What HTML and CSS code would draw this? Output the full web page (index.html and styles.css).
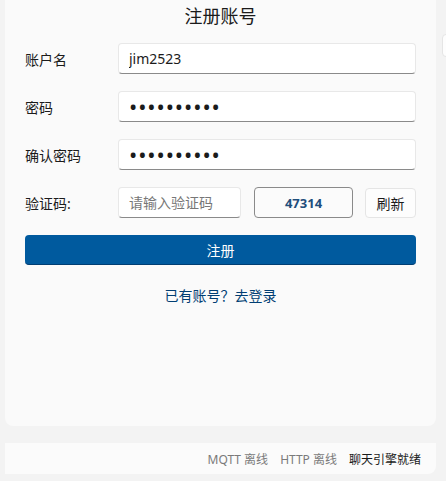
FILE: index.html
```html
<!DOCTYPE html>
<html lang="zh-CN">
<head>
    <meta charset="UTF-8">
    <meta name="viewport" content="width=device-width, initial-scale=1.0">
    <title>注册账号</title>
    <link rel="stylesheet" href="styles.css">
</head>
<body>
    <div class="page">
        <div class="card">
            <h1>注册账号</h1>
            <div class="form-row">
                <label for="username">账户名</label>
                <input type="text" id="username" class="field" value="jim2523">
            </div>
            <div class="form-row">
                <label for="password">密码</label>
                <input type="password" id="password" class="field" value="abcdefghij">
            </div>
            <div class="form-row">
                <label for="confirm">确认密码</label>
                <input type="password" id="confirm" class="field" value="abcdefghij">
            </div>
            <div class="form-row">
                <label for="captcha">验证码:</label>
                <div class="captcha-group">
                    <input type="text" id="captcha" class="field captcha-input" placeholder="请输入验证码">
                    <div class="captcha-code">47314</div>
                    <button type="button" class="refresh-btn">刷新</button>
                </div>
            </div>
            <button type="button" class="register-btn">注册</button>
            <a class="login-link" href="#">已有账号？去登录</a>
        </div>
        <div class="status-bar">
            <span class="status off">MQTT 离线</span>
            <span class="status off">HTTP 离线</span>
            <span class="status ready">聊天引擎就绪</span>
        </div>
    </div>
    <div class="side-edge"></div>
</body>
</html>
```

FILE: styles.css
```css
body {
    margin: 0;
    padding: 0;
    background: #f3f3f3;
    font-family: "Noto Sans", "Noto Sans CJK SC", sans-serif;
    color: #1b1b1b;
    overflow: hidden;
    position: relative;
}
.page {
    width: 431px;
    margin-left: 5px;
}
.card {
    background: #fafafa;
    border-radius: 0 0 8px 8px;
    height: 426px;
    box-sizing: border-box;
    padding: 0 20px;
    display: flex;
    flex-direction: column;
}
h1 {
    margin: 0;
    height: 34px;
    line-height: 32px;
    text-align: center;
    font-size: 18px;
    font-weight: 400;
    color: #1b1b1b;
}
.form-row {
    display: flex;
    align-items: center;
    height: 31px;
    margin-top: 9px;
    margin-bottom: 8px;
}
.form-row label {
    width: 93px;
    font-size: 14px;
    flex-shrink: 0;
}
.field {
    box-sizing: border-box;
    height: 31px;
    flex: 1;
    min-width: 0;
    background: #fff;
    border: 1px solid #e8e8e8;
    border-bottom-color: #8a8a8a;
    border-radius: 4px;
    padding: 0 10px;
    font-family: inherit;
    font-size: 14px;
    color: #1b1b1b;
    outline: none;
}
input[type="password"] {
    font-size: 22px;
    letter-spacing: 0.9px;
    padding-bottom: 2px;
}
.captcha-group {
    flex: 1;
    display: flex;
    align-items: center;
}
.captcha-input {
    flex: none;
    width: 123px;
}
.captcha-input::placeholder {
    color: #777;
}
.captcha-code {
    box-sizing: border-box;
    width: 99px;
    height: 31px;
    margin-left: 13px;
    border: 1px solid #8a8a8a;
    border-radius: 4px;
    background: #fbfbfb;
    display: flex;
    justify-content: center;
    align-items: center;
    font-size: 13px;
    font-weight: 700;
    color: #1f4e7c;
}
.refresh-btn {
    box-sizing: border-box;
    margin-left: auto;
    width: 51px;
    height: 30px;
    border: 1px solid #e5e5e5;
    border-radius: 4px;
    background: #fdfdfd;
    font-family: inherit;
    font-size: 14px;
    color: #1b1b1b;
    padding: 0;
}
.register-btn {
    margin-top: 9px;
    height: 30px;
    border: none;
    border-radius: 4px;
    background: #005a9e;
    border-bottom: 1px solid #003e73;
    color: #fff;
    font-family: inherit;
    font-size: 14px;
}
.login-link {
    margin-top: 20px;
    text-align: center;
    font-size: 14px;
    color: #003e73;
    text-decoration: none;
}
.status-bar {
    margin-top: 17px;
    height: 31px;
    background: #fbfbfb;
    border-radius: 0 0 8px 0;
    display: flex;
    justify-content: flex-end;
    align-items: center;
    gap: 12px;
    padding-right: 15px;
    font-size: 12px;
}
.status.off {
    color: #7a7a7a;
}
.status.ready {
    color: #1b1b1b;
}
.side-edge {
    position: absolute;
    top: 34px;
    left: 442px;
    width: 20px;
    height: 21px;
    border: 1px solid #e5e5e5;
    border-radius: 4px;
    background: #fdfdfd;
}
```
